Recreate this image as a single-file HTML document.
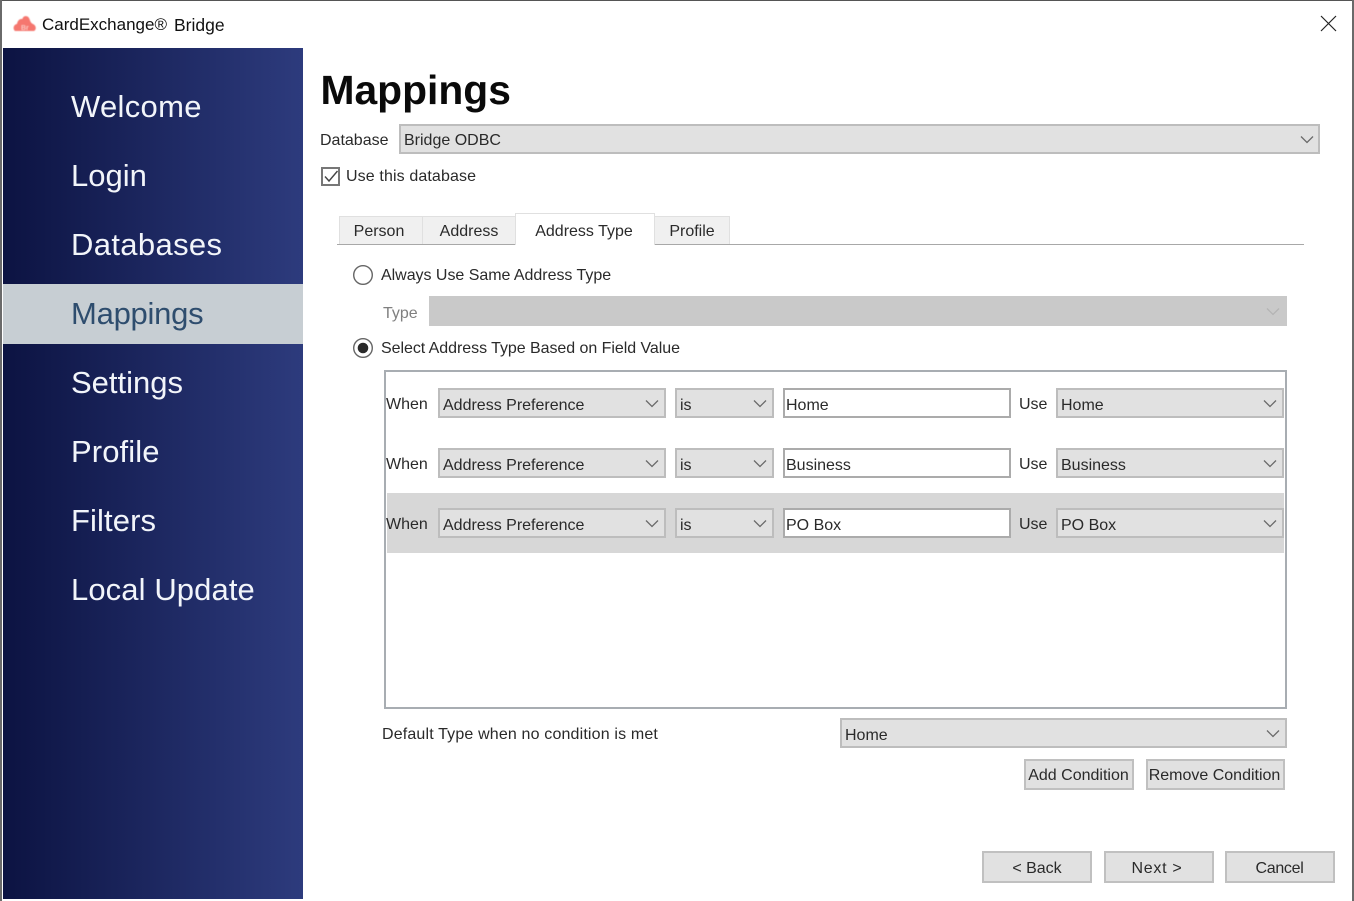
<!DOCTYPE html>
<html lang="en">
<head>
<meta charset="utf-8">
<title>CardExchange Bridge</title>
<style>
html,body{margin:0;padding:0;background:#fff}
#w{position:relative;width:1354px;height:901px;overflow:hidden;background:#fff;font-family:"Liberation Sans",sans-serif;font-size:16px;color:#2a2a2a}
#w div,#w svg{position:absolute;box-sizing:border-box}
.t{white-space:pre;line-height:20px;height:20px}
.n{white-space:pre;left:71px;font-size:31px;line-height:40px;height:40px;color:#f2f5fa}
.c{background:#e1e1e1;border:2px solid #bdbdbd;line-height:32px;padding-left:3px;white-space:pre}
.i{background:#fff;border:2px solid #ababab;line-height:32px;padding-left:1px;white-space:pre}
.b{background:#e1e1e1;border:2px solid #c0c0c0;text-align:center;white-space:pre}
.tab{background:#f0f0f0;border:1px solid #e0e0e0;border-bottom:0;text-align:center;line-height:30px;white-space:pre}
.v{stroke:#6a6a6a;stroke-width:1.300;fill:none}
</style>
</head>
<body>
<div id="w">
<div style="left:0;top:0;width:1354px;height:1px;background:#555"></div>
<div style="left:1352px;top:0;width:2px;height:901px;background:#6a6a6a"></div>

<svg style="left:13px;top:14px;filter:blur(.5px)" width="24" height="18" viewBox="0 0 24 18"><path d="M2 17 C-.5 15 .5 10.500 4 10 C4.500 6.500 7 4.500 9.500 5 C10 1.500 15 1 16.500 5 C17.500 8 18 9 20 10 C23.500 11.500 23.500 16 21 17 Z" fill="#f5776f"/><text x="8" y="16" font-family="Liberation Sans" font-size="7" font-weight="700" fill="#fbc9c3">Br</text></svg>
<div class="t" style="left:42px;top:15px;font-size:17px;color:#111">CardExchange®</div>
<div class="t" style="left:174px;top:15px;font-size:17.500px;color:#111">Bridge</div>
<svg style="left:1320px;top:15px" width="17" height="17" viewBox="0 0 17 17"><path d="M1 1 L16 16 M16 1 L1 16" stroke="#222" stroke-width="1.200" fill="none"/></svg>

<div style="left:3px;top:48px;width:300px;height:852px;background:linear-gradient(90deg,#0c1342 0%,#2d3b7d 100%)"></div>
<div style="left:3px;top:284px;width:300px;height:60px;background:#c7ced3"></div>
<div class="n" style="top:87px;letter-spacing:.3px">Welcome</div>
<div class="n" style="top:156px">Login</div>
<div class="n" style="top:225px;letter-spacing:.35px">Databases</div>
<div class="n" style="top:294px;color:#2e4d6e;letter-spacing:-.25px">Mappings</div>
<div class="n" style="top:363px">Settings</div>
<div class="n" style="top:432px;letter-spacing:.1px">Profile</div>
<div class="n" style="top:501px;letter-spacing:.1px">Filters</div>
<div class="n" style="top:570px;letter-spacing:.1px">Local Update</div>

<div style="left:320.500px;top:65px;font-size:40.800px;font-weight:700;line-height:50px;height:50px;color:#0a0a0a;white-space:pre">Mappings</div>

<div class="t" style="left:320px;top:131px">Database</div>
<div class="c" style="left:399px;top:124px;width:921px;height:30px;line-height:30px">Bridge ODBC</div>
<svg style="left:1300px;top:135px" width="14" height="9" viewBox="0 0 14 9"><path class="v" d="M1 1.500 L7 7.500 L13 1.500"/></svg>

<div style="left:321px;top:167px;width:19px;height:19px;border:2px solid #777;background:#fff"></div>
<svg style="left:321px;top:166px" width="20" height="20" viewBox="0 0 20 20"><path d="M4 10.500 L8 15 L16.500 5" stroke="#444" stroke-width="1.400" fill="none"/></svg>
<div class="t" style="left:346px;top:167px;letter-spacing:.12px">Use this database</div>

<div style="left:337px;top:244px;width:967px;height:1px;background:#a8a8a8"></div>
<div class="tab" style="left:339px;top:216px;width:84px;height:28px;padding-right:4px">Person</div>
<div class="tab" style="left:422px;top:216px;width:94px;height:28px">Address</div>
<div class="tab" style="left:515px;top:213px;width:140px;height:32px;background:#fff;line-height:35px;padding-right:2px">Address Type</div>
<div class="tab" style="left:654px;top:216px;width:76px;height:28px">Profile</div>

<svg style="left:352px;top:264px" width="22" height="22" viewBox="0 0 22 22"><circle cx="11" cy="11" r="9.300" fill="#fff" stroke="#666" stroke-width="1.400"/></svg>
<div class="t" style="left:381px;top:266px;letter-spacing:-.03px">Always Use Same Address Type</div>
<div class="t" style="left:383px;top:304px;color:#808080">Type</div>
<div style="left:429px;top:296px;width:858px;height:30px;background:#c9c9c9"></div>
<svg style="left:1266px;top:307px" width="14" height="9" viewBox="0 0 14 9"><path d="M1 1.500 L7 7.500 L13 1.500" stroke="#b4b4b4" stroke-width="1.300" fill="none"/></svg>
<svg style="left:352px;top:337px" width="22" height="22" viewBox="0 0 22 22"><circle cx="11" cy="11" r="9.300" fill="#fff" stroke="#666" stroke-width="1.400"/><circle cx="11" cy="11" r="5.300" fill="#2a2a2a"/></svg>
<div class="t" style="left:381px;top:339px;letter-spacing:-.05px">Select Address Type Based on Field Value</div>

<div style="left:384px;top:370px;width:903px;height:339px;border:2px solid #a8adb2;background:#fff"></div>
<div style="left:387px;top:493px;width:897px;height:60px;background:#d7d7d7"></div>

<div class="t" style="left:386px;top:395px">When</div>
<div class="c" style="left:438px;top:388px;width:228px;height:30px">Address Preference</div>
<svg style="left:645px;top:399px" width="14" height="9" viewBox="0 0 14 9"><path class="v" d="M1 1.500 L7 7.500 L13 1.500"/></svg>
<div class="c" style="left:675px;top:388px;width:99px;height:30px">is</div>
<svg style="left:753px;top:399px" width="14" height="9" viewBox="0 0 14 9"><path class="v" d="M1 1.500 L7 7.500 L13 1.500"/></svg>
<div class="i" style="left:783px;top:388px;width:228px;height:30px">Home</div>
<div class="t" style="left:1019px;top:395px">Use</div>
<div class="c" style="left:1056px;top:388px;width:228px;height:30px">Home</div>
<svg style="left:1263px;top:399px" width="14" height="9" viewBox="0 0 14 9"><path class="v" d="M1 1.500 L7 7.500 L13 1.500"/></svg>

<div class="t" style="left:386px;top:455px">When</div>
<div class="c" style="left:438px;top:448px;width:228px;height:30px">Address Preference</div>
<svg style="left:645px;top:459px" width="14" height="9" viewBox="0 0 14 9"><path class="v" d="M1 1.500 L7 7.500 L13 1.500"/></svg>
<div class="c" style="left:675px;top:448px;width:99px;height:30px">is</div>
<svg style="left:753px;top:459px" width="14" height="9" viewBox="0 0 14 9"><path class="v" d="M1 1.500 L7 7.500 L13 1.500"/></svg>
<div class="i" style="left:783px;top:448px;width:228px;height:30px">Business</div>
<div class="t" style="left:1019px;top:455px">Use</div>
<div class="c" style="left:1056px;top:448px;width:228px;height:30px">Business</div>
<svg style="left:1263px;top:459px" width="14" height="9" viewBox="0 0 14 9"><path class="v" d="M1 1.500 L7 7.500 L13 1.500"/></svg>

<div class="t" style="left:386px;top:515px">When</div>
<div class="c" style="left:438px;top:508px;width:228px;height:30px">Address Preference</div>
<svg style="left:645px;top:519px" width="14" height="9" viewBox="0 0 14 9"><path class="v" d="M1 1.500 L7 7.500 L13 1.500"/></svg>
<div class="c" style="left:675px;top:508px;width:99px;height:30px">is</div>
<svg style="left:753px;top:519px" width="14" height="9" viewBox="0 0 14 9"><path class="v" d="M1 1.500 L7 7.500 L13 1.500"/></svg>
<div class="i" style="left:783px;top:508px;width:228px;height:30px">PO Box</div>
<div class="t" style="left:1019px;top:515px">Use</div>
<div class="c" style="left:1056px;top:508px;width:228px;height:30px">PO Box</div>
<svg style="left:1263px;top:519px" width="14" height="9" viewBox="0 0 14 9"><path class="v" d="M1 1.500 L7 7.500 L13 1.500"/></svg>

<div class="t" style="left:382px;top:725px;letter-spacing:.16px">Default Type when no condition is met</div>
<div class="c" style="left:840px;top:718px;width:447px;height:30px">Home</div>
<svg style="left:1266px;top:729px" width="14" height="9" viewBox="0 0 14 9"><path class="v" d="M1 1.500 L7 7.500 L13 1.500"/></svg>

<div class="b" style="left:1024px;top:759px;width:110px;height:31px;line-height:29px;padding-right:1px">Add Condition</div>
<div class="b" style="left:1146px;top:759px;width:139px;height:31px;line-height:29px;padding-right:2px">Remove Condition</div>
<div class="b" style="left:982px;top:851px;width:110px;height:32px;line-height:32px">&lt; Back</div>
<div class="b" style="left:1104px;top:851px;width:110px;height:32px;line-height:32px;letter-spacing:.7px;padding-right:4px">Next &gt;</div>
<div class="b" style="left:1225px;top:851px;width:110px;height:32px;line-height:32px;letter-spacing:-.3px;padding-right:1px">Cancel</div>

<div style="left:0;top:899px;width:1352px;height:2px;background:#fff"></div>
<div style="left:0;top:0;width:2px;height:901px;background:#6a6a6a"></div>
</div>
</body>
</html>
